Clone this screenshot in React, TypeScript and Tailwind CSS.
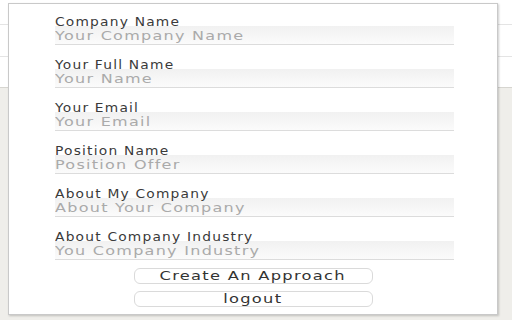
const fields = [
  { label: "Company Name", placeholder: "Your Company Name" },
  { label: "Your Full Name", placeholder: "Your Name" },
  { label: "Your Email", placeholder: "Your Email" },
  { label: "Position Name", placeholder: "Position Offer" },
  { label: "About My Company", placeholder: "About Your Company" },
  { label: "About Company Industry", placeholder: "You Company Industry" },
];

export default function App() {
  return (
    <div className="relative w-[512px] h-[320px] overflow-hidden bg-[#efeeea] font-['Lucida_Grande','DejaVu_Sans',sans-serif]">
      {/* page behind the popup */}
      <div className="flex flex-col bg-white">
        <div className="h-[25px] border-b border-[#e4e4e4]" />
        <div className="h-[32px] border-b border-[#e4e4e4]" />
        <div className="h-[31px] border-b border-[#d6d5d0]" />
      </div>

      {/* popup */}
      <div className="absolute left-[8px] top-[3px] w-[490px] h-[312px] bg-white border border-[#c9c9c9] shadow-[1px_1px_2px_rgba(0,0,0,0.2)]">
        <div className="flex flex-col pl-[46px] pt-[9px]">
          <div className="flex flex-col gap-[11px]">
            {fields.map((f) => (
              <div key={f.label} className="flex flex-col w-[399px]">
                <label className="block h-[13px] text-[11.5px] leading-[18px] text-[#3a3a3a]">
                  <span className="inline-block origin-left scale-x-[1.2] tracking-[1px] whitespace-nowrap">
                    {f.label}
                  </span>
                </label>
                <div className="h-[19px] bg-gradient-to-b from-[#f1f1f1] to-[#fbfbfb] border-b border-[#dcdcdc] overflow-hidden">
                  <input
                    placeholder={f.placeholder}
                    className="block w-[312px] h-[18px] p-0 origin-left scale-x-[1.28] bg-transparent text-[12.5px] leading-[19px] tracking-[1px] text-[#333] placeholder:text-[#aaa] outline-none"
                  />
                </div>
              </div>
            ))}
          </div>
          <div className="flex flex-col items-center gap-[7px] mt-[8px] mr-[46px]">
            <button className="w-[239px] h-[16px] rounded-[6px] border border-[#dadada] bg-white text-[12.5px] leading-[14px] text-[#333]">
              <span className="inline-block scale-x-[1.3] tracking-[1px]">Create An Approach</span>
            </button>
            <button className="w-[239px] h-[16px] rounded-[6px] border border-[#dadada] bg-white text-[12.5px] leading-[14px] text-[#333]">
              <span className="inline-block scale-x-[1.3] tracking-[1px]">logout</span>
            </button>
          </div>
        </div>
      </div>
    </div>
  );
}
